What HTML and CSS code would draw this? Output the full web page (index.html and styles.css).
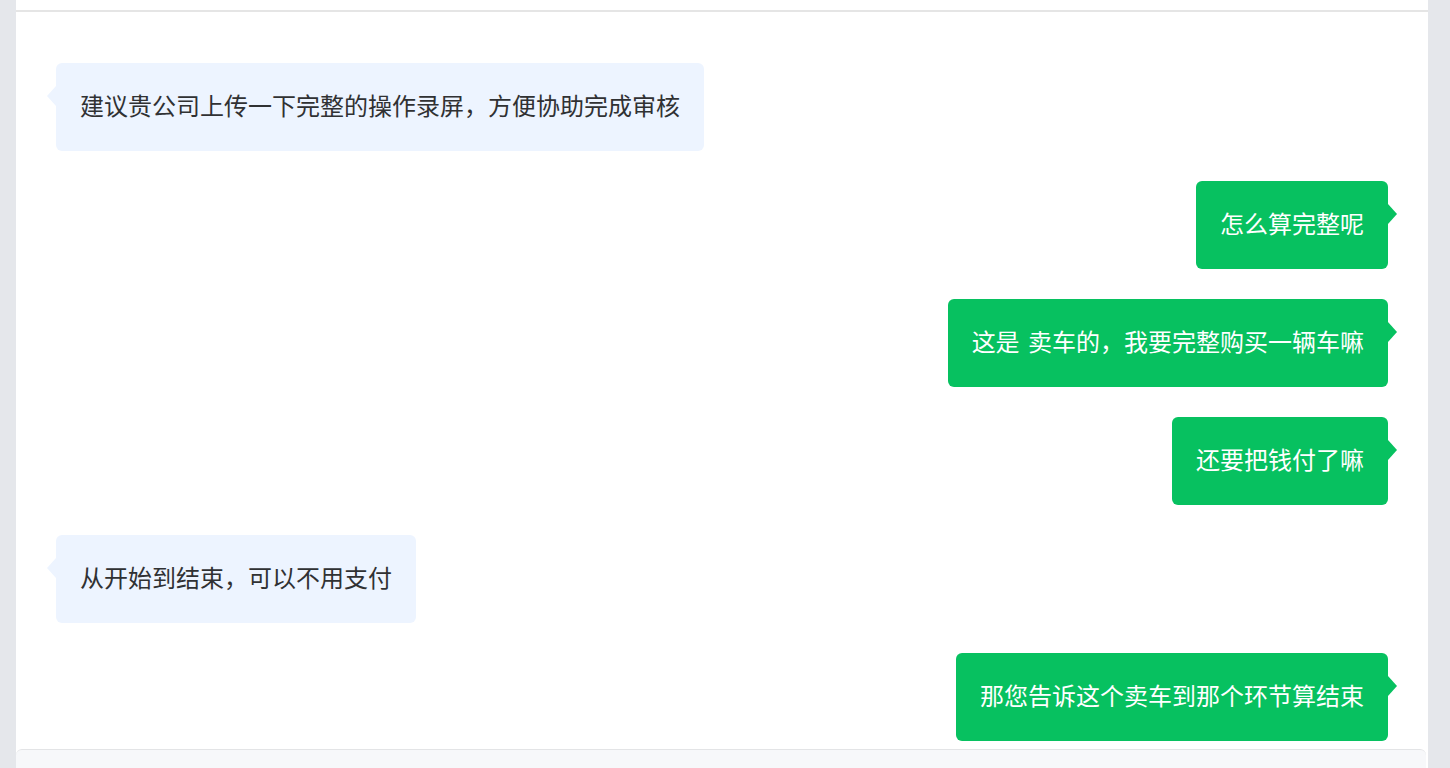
FILE: index.html
```html
<!DOCTYPE html>
<html lang="zh-CN">
<head>
<meta charset="utf-8">
<title>聊天</title>
<link rel="stylesheet" href="styles.css">
</head>
<body>
<div class="page">
  <div class="header"></div>
  <div class="messages">
    <div class="row left"><div class="bubble">建议贵公司上传一下完整的操作录屏，方便协助完成审核</div></div>
    <div class="row right"><div class="bubble">怎么算完整呢</div></div>
    <div class="row right"><div class="bubble">这是 卖车的，我要完整购买一辆车嘛</div></div>
    <div class="row right"><div class="bubble">还要把钱付了嘛</div></div>
    <div class="row left"><div class="bubble">从开始到结束，可以不用支付</div></div>
    <div class="row right"><div class="bubble">那您告诉这个卖车到那个环节算结束</div></div>
  </div>
  <div class="footer"></div>
</div>
</body>
</html>
```
FILE: styles.css
```css
html, body {
  margin: 0;
  padding: 0;
  height: 100%;
}
body {
  background: #e5e7eb;
  font-family: "Noto Sans CJK SC", "Noto Sans", sans-serif;
  overflow: hidden;
}
.page {
  margin-left: 16px;
  width: 1412px;
  height: 768px;
  background: #ffffff;
  display: flex;
  flex-direction: column;
  overflow: hidden;
}
.header {
  height: 10px;
  flex: none;
  border-bottom: 2px solid #e5e5e5;
}
.messages {
  flex: none;
  padding: 51px 40px 0 40px;
  display: flex;
  flex-direction: column;
  gap: 30px;
}
.row {
  display: flex;
}
.row.left { justify-content: flex-start; }
.row.right { justify-content: flex-end; }
.bubble {
  position: relative;
  padding: 22px 24px 26px 24px;
  font-size: 24px;
  line-height: 40px;
  border-radius: 6px;
  white-space: pre;
  word-spacing: 3px;
}
.left .bubble {
  background: #edf4ff;
  color: #303133;
}
.right .bubble {
  background: #07c160;
  color: #ffffff;
}
.bubble::before {
  content: "";
  position: absolute;
  top: 23px;
  width: 0;
  height: 0;
  border-top: 10px solid transparent;
  border-bottom: 10px solid transparent;
}
.left .bubble::before {
  left: -9px;
  border-right: 9px solid #edf4ff;
}
.right .bubble::before {
  right: -9px;
  border-left: 9px solid #07c160;
}
.footer {
  flex: none;
  margin-top: 8px;
  margin-right: 2px;
  height: 160px;
  background: #f7f8fa;
  border-top: 1px solid #e3e4e6;
  border-radius: 6px 6px 0 0;
}
```
